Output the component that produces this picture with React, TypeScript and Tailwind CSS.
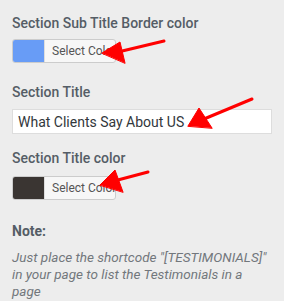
export default function App() {
  return (
    <div className="relative h-[301px] w-[284px] overflow-hidden bg-[#ededed] font-['Roboto',sans-serif]">
      <div className="px-3 pt-[13px]">
        <div className="text-[14px] font-medium leading-5 text-[#555d66]">Section Sub Title Border color</div>
        <ColorButton swatch="bg-[#689cf6]" className="mt-[6px]" />

        <div className="mt-[19px] text-[14px] font-medium leading-5 text-[#555d66]">Section Title</div>
        <input
          readOnly
          value="What Clients Say About US"
          className="mt-[7px] block h-[25px] w-[260px] border border-[#dddddd] bg-white px-[5px] text-[14px] text-[#32373c] outline-none"
        />

        <div className="mt-[14px] text-[14px] font-medium leading-5 text-[#555d66]">Section Title color</div>
        <ColorButton swatch="bg-[#3a3532]" className="mt-[8px]" />

        <div className="mt-[21px] text-[14px] font-bold leading-5 text-[#555d66]">Note:</div>
        <p className="mt-[8px] w-[256px] text-[13.5px] italic leading-[17px] text-[#72777c]">
          Just place the shortcode "[TESTIMONIALS]" in your page to list the Testimonials in a page
        </p>
      </div>

      <svg className="pointer-events-none absolute left-0 top-0" width="284" height="301">
        <g fill="#f00" stroke="#f00" strokeWidth="3" strokeLinecap="round">
          <line x1="164" y1="41" x2="118" y2="52" />
          <polygon points="102,53 120,42 125,63" strokeWidth="1" />
          <line x1="252" y1="99" x2="204" y2="119" />
          <polygon points="188,126 199,108 212,128" strokeWidth="1" />
          <line x1="148" y1="172" x2="114" y2="181" />
          <polygon points="100,185 115,170 123,192" strokeWidth="1" />
        </g>
      </svg>
    </div>
  );
}

function ColorButton({ swatch, className }: { swatch: string; className: string }) {
  return (
    <div className={`flex h-[24px] w-[104px] overflow-hidden rounded-[3px] border border-[#cccccc] bg-[#f7f7f7] ${className}`}>
      <span className={`w-[31px] shrink-0 ${swatch}`} />
      <span className="flex items-center border-l border-[#dddddd] pl-[7px] text-[12px] text-[#555555] whitespace-nowrap">
        Select Color
      </span>
    </div>
  );
}
